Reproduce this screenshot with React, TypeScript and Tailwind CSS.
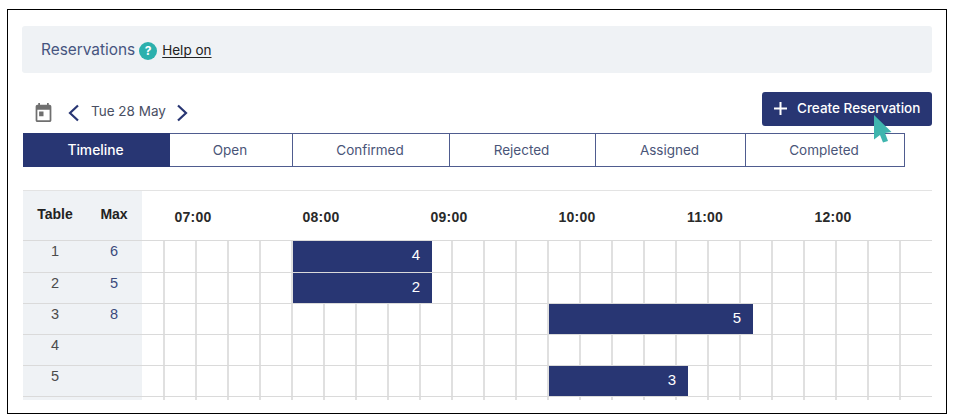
const ink = "text-[#3a4a7c]";

const tabs = [
  { label: "Timeline", width: "w-[147px]" },
  { label: "Open", width: "w-[123px]" },
  { label: "Confirmed", width: "w-[157px]" },
  { label: "Rejected", width: "w-[146px]" },
  { label: "Assigned", width: "w-[150px]" },
  { label: "Completed", width: "w-[159px]" },
];

const hours = ["07:00", "08:00", "09:00", "10:00", "11:00", "12:00"];
const ticks = Array.from({ length: 24 }, (_, i) => i);

const rows = [
  { table: "1", max: "6", height: "h-[32px]", bar: { pos: "left-[151px] w-[139px]", guests: "4" } },
  { table: "2", max: "5", height: "h-[31px]", bar: { pos: "left-[151px] w-[139px]", guests: "2" } },
  { table: "3", max: "8", height: "h-[31px]", bar: { pos: "left-[407px] w-[204px]", guests: "5" } },
  { table: "4", max: "", height: "h-[31px]" },
  { table: "5", max: "", height: "h-[31px]", bar: { pos: "left-[407px] w-[139px]", guests: "3" } },
];

const CalendarIcon = () => (
  <svg width="21" height="23" viewBox="0 0 24 24" fill="#6f6f6f" preserveAspectRatio="none">
    <path d="M19 4h-1V2h-2v2H8V2H6v2H5C3.900 4 3 4.900 3 6v14c0 1.100.9 2 2 2h14c1.100 0 2-.9 2-2V6c0-1.100-.9-2-2-2zm0 16H5V9h14v11zM7 11h5v5H7z" />
  </svg>
);

const Chevron = ({ right = false }: { right?: boolean }) => (
  <svg width="12" height="18" viewBox="0 0 12 18" fill="none" stroke="#283673" strokeWidth="2.2">
    <path d={right ? "M2 1.500 10 9l-8 7.500" : "M10 1.500 2 9l8 7.500"} />
  </svg>
);

const Pointer = () => (
  <svg className="absolute left-[112px] top-[23px]" width="18" height="28" viewBox="0 0 18 28" fill="#3fb5ae">
    <path d="M0 0 17.500 17 11 18 14 26 9 27.500 6 20 0 24.500z" />
  </svg>
);

const Gridlines = () => (
  <div className="flex h-full pl-[21px]">
    {ticks.map((t) => (
      <div key={t} className="h-full w-[32px] shrink-0 border-l-2 border-[#e0e0e0]" />
    ))}
  </div>
);

export default function App() {
  return (
    <div className="h-[420px] w-[954px] overflow-hidden bg-white pl-[7px] pt-[9px] font-['Inter',sans-serif]">
      <div className="h-[405px] w-[940px] border border-black pl-[15px] pt-[16px]">
        <div className="ml-[-1px] flex h-[47px] w-[910px] items-center gap-[4px] rounded-[3px] bg-[#eff2f5] pl-[19px]">
          <span className="text-[15.400px] text-[#46557f]">Reservations</span>
          <span className="mt-[2px] flex h-[18px] w-[18px] items-center justify-center rounded-full bg-[#2bb0ad] text-[12px] font-bold text-white">?</span>
          <span className="ml-px mt-[2px] text-[13.500px] text-[#222222] underline underline-offset-2">Help on</span>
        </div>

        <div className="mt-[19px] flex h-[41px] w-[909px] items-start justify-between">
          <div className="flex items-center pl-[10px] pt-[9px]">
            <CalendarIcon />
            <div className="ml-[14px] flex items-center gap-[9px]">
              <Chevron />
              <span className="mb-[3px] ml-[2px] mr-px text-[13.500px] text-[#4a4f63]">Tue 28 May</span>
              <Chevron right />
            </div>
          </div>
          <button className="relative flex h-[34px] w-[170px] items-center rounded-[3px] bg-[#283673] pb-[2px] pl-[12px] text-[13.500px] font-medium text-white">
            <svg width="13" height="13" viewBox="0 0 13 13" fill="none" stroke="white" strokeWidth="2">
              <path d="M6.500 0v13M0 6.500h13" />
            </svg>
            <span className="ml-[10px]">Create Reservation</span>
            <Pointer />
          </button>
        </div>

        <div className="flex h-[34px] w-[882px]">
          {tabs.map((tab, i) => (
            <div
              key={tab.label}
              className={`flex h-full items-center justify-center border border-[#4f5c8f] pr-[2px] ${tab.width} ${
                i === 0 ? "border-[#283673] bg-[#283673] text-[13.800px] font-medium text-white" : "border-l-0 text-[13.500px] text-[#4a5578]"
              }`}
            >
              {tab.label}
            </div>
          ))}
        </div>

        <div className="mt-[23px] w-[909px] border-t border-[#e3e3e3] font-['Liberation_Sans',sans-serif]">
          <div className="flex h-[49px]">
            <div className="flex w-[119px] items-center bg-[#eff2f5] pb-[2px] text-[14px] font-bold text-[#222222]">
              <span className="w-[64px] text-center">Table</span>
              <span className="w-[54px] text-center">Max</span>
            </div>
            <div className="flex flex-1 items-center pt-[4px] text-[14px] font-bold tracking-[0.2px] text-[#2a2a2a]">
              {hours.map((h) => (
                <span key={h} className="w-[128px] text-center first-of-type:ml-[-13px]">{h}</span>
              ))}
            </div>
          </div>

          {rows.map((row) => (
            <div key={row.table} className={`flex border-t border-[#dadada] ${row.height}`}>
              <div className="flex w-[119px] items-center bg-[#eff2f5] pb-[9px] text-[14.500px]">
                <span className="w-[64px] text-center text-[#4b4b4b]">{row.table}</span>
                <span className={`w-[54px] text-center ${ink}`}>{row.max}</span>
              </div>
              <div className="relative flex-1">
                <Gridlines />
                {row.bar && (
                  <div className={`absolute inset-y-0 flex items-center justify-end bg-[#283673] pb-[2px] pr-[12px] text-[15px] text-white ${row.bar.pos}`}>
                    {row.bar.guests}
                  </div>
                )}
              </div>
            </div>
          ))}

          <div className="flex h-[4px] border-t border-[#dadada]">
            <div className="w-[119px] bg-[#eff2f5]" />
            <div className="flex-1">
              <Gridlines />
            </div>
          </div>
        </div>
      </div>
    </div>
  );
}
